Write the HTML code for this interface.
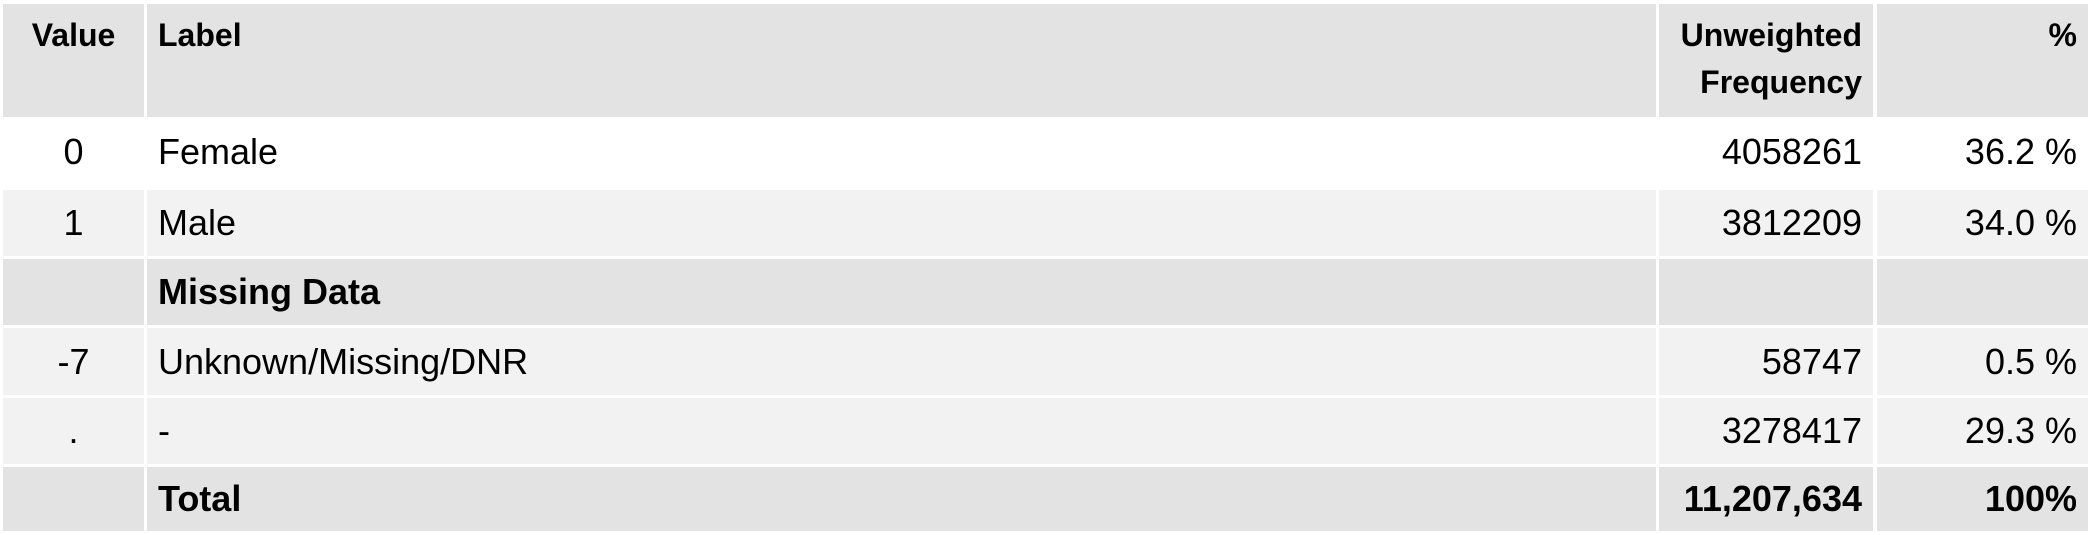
<!DOCTYPE html>
<html><head><meta charset="utf-8"><style>
body{margin:0;width:2092px;height:535px;background:#fff;font-family:"Liberation Sans",Arial,sans-serif;color:#000;position:relative;overflow:hidden}
.c{position:absolute;box-sizing:border-box;display:flex;align-items:center;font-size:36px;white-space:nowrap}
.h{background:#e3e3e3;font-weight:bold;font-size:32px;line-height:47px;align-items:flex-start;padding-top:8px}
.g{background:#e3e3e3}
.l{background:#f2f2f2}
.w{background:#fff}
.b{font-weight:bold}
.v{justify-content:center}
.lb{padding-left:11px}
.r{justify-content:flex-end;padding-right:11px;text-align:right}
</style></head><body>
<div class="c h v" style="left:3px;top:4px;width:141px;height:113px">Value</div>
<div class="c h lb" style="left:147px;top:4px;width:1509px;height:113px">Label</div>
<div class="c h r" style="left:1659px;top:4px;width:214px;height:113px">Unweighted<br>Frequency</div>
<div class="c h r" style="left:1877px;top:4px;width:211px;height:113px">%</div>

<div class="c w v" style="left:3px;top:117px;width:141px;height:70px">0</div>
<div class="c w lb" style="left:147px;top:117px;width:1509px;height:70px">Female</div>
<div class="c w r" style="left:1659px;top:117px;width:214px;height:70px">4058261</div>
<div class="c w r" style="left:1877px;top:117px;width:211px;height:70px">36.2 %</div>

<div class="c l v" style="left:3px;top:190px;width:141px;height:66px">1</div>
<div class="c l lb" style="left:147px;top:190px;width:1509px;height:66px">Male</div>
<div class="c l r" style="left:1659px;top:190px;width:214px;height:66px">3812209</div>
<div class="c l r" style="left:1877px;top:190px;width:211px;height:66px">34.0 %</div>

<div class="c g v" style="left:3px;top:259px;width:141px;height:66px"></div>
<div class="c g lb b" style="left:147px;top:259px;width:1509px;height:66px">Missing Data</div>
<div class="c g r" style="left:1659px;top:259px;width:214px;height:66px"></div>
<div class="c g r" style="left:1877px;top:259px;width:211px;height:66px"></div>

<div class="c l v" style="left:3px;top:328px;width:141px;height:67px">-7</div>
<div class="c l lb" style="left:147px;top:328px;width:1509px;height:67px">Unknown/Missing/DNR</div>
<div class="c l r" style="left:1659px;top:328px;width:214px;height:67px">58747</div>
<div class="c l r" style="left:1877px;top:328px;width:211px;height:67px">0.5 %</div>

<div class="c l v" style="left:3px;top:398px;width:141px;height:66px">.</div>
<div class="c l lb" style="left:147px;top:398px;width:1509px;height:66px">-</div>
<div class="c l r" style="left:1659px;top:398px;width:214px;height:66px">3278417</div>
<div class="c l r" style="left:1877px;top:398px;width:211px;height:66px">29.3 %</div>

<div class="c g v" style="left:3px;top:467px;width:141px;height:64px"></div>
<div class="c g lb b" style="left:147px;top:467px;width:1509px;height:64px">Total</div>
<div class="c g r b" style="left:1659px;top:467px;width:214px;height:64px">11,207,634</div>
<div class="c g r b" style="left:1877px;top:467px;width:211px;height:64px">100%</div>
</body></html>
